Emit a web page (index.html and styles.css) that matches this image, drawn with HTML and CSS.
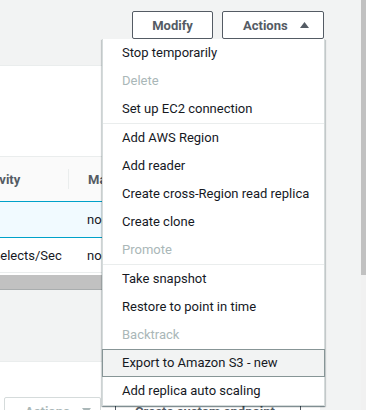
FILE: index.html
```html
<!DOCTYPE html>
<html lang="en">
<head>
<meta charset="utf-8">
<title>Instance actions</title>
<link rel="stylesheet" href="styles.css">
</head>
<body>
<div class="screen">
  <div class="main">
    <div class="topbar">
      <button class="btn btn-modify">Modify</button>
      <button class="btn btn-actions">Actions<svg class="caret" viewBox="0 0 9 6"><path d="M0 6L4.5 0L9 6Z"/></svg></button>
    </div>
    <section class="card card-table">
      <div class="card-head"></div>
      <div class="table">
        <div class="tr th">
          <div class="td c1">Activity</div>
          <div class="td c2"><span class="divider"></span>Maintenance</div>
        </div>
        <div class="tr selected">
          <div class="td c1"></div>
          <div class="td c2">none</div>
        </div>
        <div class="tr row">
          <div class="td c1 metric">7 Selects/Sec</div>
          <div class="td c2">none</div>
        </div>
      </div>
      <div class="hscroll"></div>
    </section>
    <section class="card card-endpoints">
      <div class="card-actions">
        <button class="btn btn-disabled">Actions<svg class="caret" viewBox="0 0 9 6"><path d="M0 0L9 0L4.5 6Z"/></svg></button>
        <button class="btn btn-create">Create custom endpoint</button>
      </div>
    </section>
  </div>
  <div class="vscroll"><div class="vthumb"></div></div>

  <div class="menu">
    <ul class="group">
      <li class="item">Stop temporarily</li>
      <li class="item disabled">Delete</li>
      <li class="item">Set up EC2 connection</li>
    </ul>
    <ul class="group">
      <li class="item">Add AWS Region</li>
      <li class="item">Add reader</li>
      <li class="item">Create cross-Region read replica</li>
      <li class="item">Create clone</li>
      <li class="item disabled">Promote</li>
    </ul>
    <ul class="group">
      <li class="item">Take snapshot</li>
      <li class="item">Restore to point in time</li>
      <li class="item disabled">Backtrack</li>
      <li class="item active">Export to Amazon S3 - new</li>
      <li class="item">Add replica auto scaling</li>
    </ul>
  </div>
</div>
</body>
</html>
```
FILE: styles.css
```css
* { box-sizing: border-box; }
html, body { margin: 0; padding: 0; }
body {
  width: 366px;
  height: 410px;
  overflow: hidden;
  background: #f2f3f3;
  font-family: Roboto, "Liberation Sans", sans-serif;
  font-size: 13px;
  color: #16191f;
}
.screen {
  position: relative;
  display: flex;
  width: 366px;
  height: 410px;
  overflow: hidden;
}
.main {
  flex: 1;
  min-width: 0;
  display: flex;
  flex-direction: column;
}
.vscroll {
  width: 5px;
  background: #f1f1f1;
  display: flex;
  flex-direction: column;
}
.vthumb { height: 275px; background: #c1c1c1; }

.topbar {
  height: 65px;
  flex: none;
  display: flex;
  justify-content: flex-end;
  align-items: flex-start;
  gap: 9px;
  padding: 11px 37px 0 0;
}
.btn {
  height: 28px;
  border: 1px solid #545b64;
  border-radius: 2px;
  background: #fff;
  color: #545b64;
  font-family: Roboto, "Liberation Sans", sans-serif;
  font-weight: 700;
  font-size: 13px;
  padding: 0 19px;
  display: flex;
  align-items: center;
  gap: 12px;
  white-space: nowrap;
  flex: none;
}
.btn-modify { width: 81px; justify-content: center; padding: 0; }
.btn-actions { width: 102px; padding-left: 20px; }
.caret { width: 9px; height: 6px; fill: #545b64; flex: none; }

.card {
  background: #fff;
  border-top: 1px solid #eaeded;
  margin-left: -120px;
  width: 440px;
  flex: none;
}
.card-head { height: 90px; }
.tr {
  display: grid;
  grid-template-columns: 188px 1fr;
}
.td { display: flex; align-items: center; white-space: nowrap; overflow: hidden; }
.c1 { padding-left: 96px; }
.c2 { padding-left: 19px; }
.th {
  height: 45px;
  border-top: 1px solid #eaeded;
  background: #fafafa;
  font-weight: 700;
  color: #545b64;
}
.th .c2 { padding-left: 0; }
.divider { width: 1px; height: 20px; background: #eaeded; margin-right: 19px; flex: none; }
.selected {
  height: 37px;
  border-top: 1px solid #00a1c9;
  border-bottom: 1px solid #00a1c9;
  background: #f1faff;
}
.row {
  height: 35px;
  border-bottom: 1px solid #eaeded;
}
.metric { padding-left: 102px; }
.hscroll {
  margin-top: 2px;
  height: 15px;
  background: #c1c1c1;
  border-bottom: 1px solid #a9adae;
}

.card-endpoints {
  margin-top: 71px;
  flex: 1;
}
.card-actions {
  display: flex;
  justify-content: flex-end;
  gap: 14px;
  padding: 35px 19px 0 0;
}
.btn-disabled {
  width: 97px;
  padding-left: 20px;
  border-color: #d5dbdb;
  color: #aab7b8;
}
.btn-disabled .caret { fill: #aab7b8; }
.btn-create { width: 186px; padding-left: 19px; }

.menu {
  position: absolute;
  left: 102px;
  top: 39px;
  width: 223px;
  background: #fff;
  border: 1px solid #d5dbdb;
  border-top: none;
  box-shadow: 0 1px 1px 0 rgba(0, 28, 36, 0.3), 1px 1px 1px 0 rgba(0, 28, 36, 0.15), -1px 1px 1px 0 rgba(0, 28, 36, 0.15);
}
.group { list-style: none; margin: 0; padding: 0; }
.group + .group { border-top: 1px solid #eaeded; }
.item {
  height: 28px;
  line-height: 28px;
  padding-left: 19px;
  white-space: nowrap;
  color: #16191f;
}
.item.disabled { color: #aab7b8; }
.item.active {
  background: #f2f3f3;
  border: 1px solid #879596;
  margin: 0 -1px;
  line-height: 26px;
}
```
